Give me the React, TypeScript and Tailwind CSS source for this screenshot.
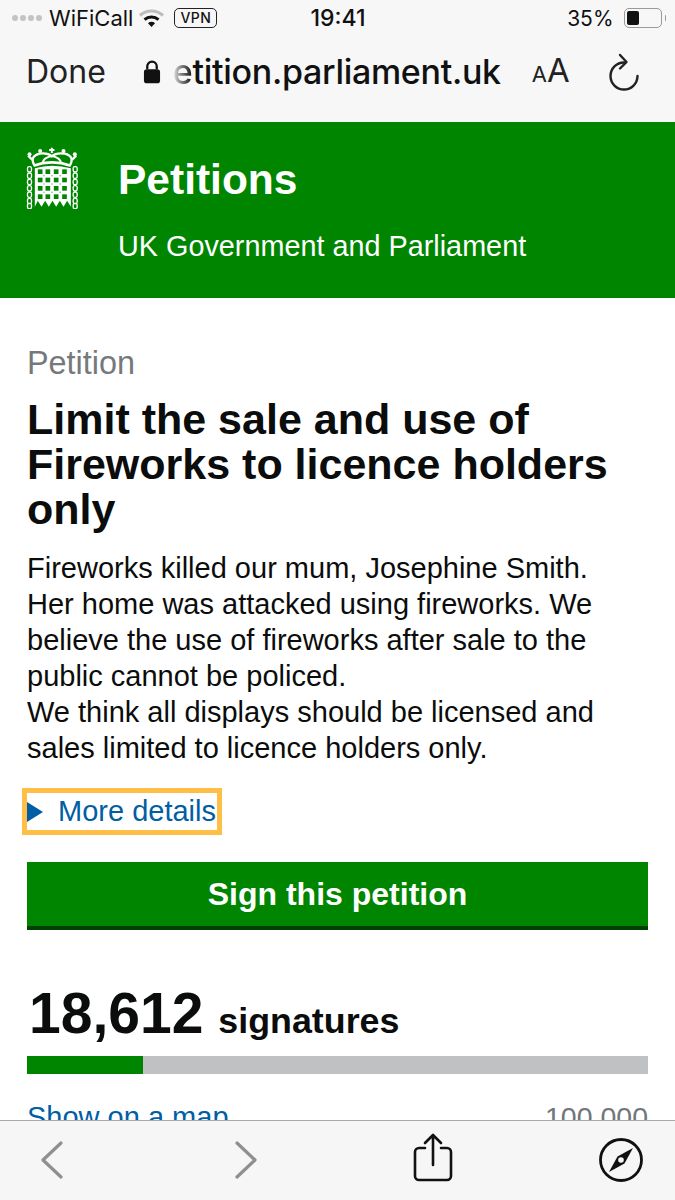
import React from "react"

const sfStack = "font-['Inter','Liberation_Sans',sans-serif]"

function Portcullis() {
  const cols = [92, 115, 140, 165]
  const rows = [110, 135, 160, 185]
  const dots = [103, 127, 152]
  const chains = [103, 122, 141, 160, 179, 198, 213]
  return (
    <svg width="53" height="62" viewBox="50 36 158 186">
      {/* crown */}
      <g fill="none" stroke="white">
        <path d="M127 38v16M119 45h16" strokeWidth="6" />
        <path d="M74 90Q60 64 90 56Q114 52 127 64Q140 52 166 56Q196 64 182 90" strokeWidth="7" />
        <path d="M101 84Q98 70 127 62Q156 70 153 84" strokeWidth="6" />
        <path d="M72 92Q127 72 184 92" strokeWidth="8" />
        <path d="M56 62l12 12M200 62l-12 12" strokeWidth="7" />
      </g>
      <g fill="white">
        <circle cx="60" cy="58" r="6" />
        <circle cx="92" cy="48" r="6" />
        <circle cx="162" cy="48" r="6" />
        <circle cx="196" cy="58" r="6" />
      </g>
      {/* gate */}
      <path
        d="M76 215V100q51-16 108 0v115l-11-18-11 18-11-18-11 18-11-18-11 18-11-18-11 18-11-18z"
        fill="white"
      />
      {rows.map((y) =>
        cols.map((x) => <rect key={`${x}-${y}`} x={x - 7} y={y - 7} width="14" height="14" fill="#008500" />),
      )}
      {dots.map((x) =>
        [122, 147, 172].map((y) => <rect key={`d${x}-${y}`} x={x - 2} y={y - 2} width="4" height="4" fill="#7fc27f" />),
      )}
      {/* chains */}
      {[60, 197].map((x) =>
        chains.map((y) => (
          <rect key={`${x}-${y}`} x={x - 6} y={y - 8} width="12" height="16" rx="5" fill="none" stroke="white" strokeWidth="4" />
        )),
      )}
    </svg>
  )
}

function Wifi() {
  return (
    <svg width="27" height="20" viewBox="0 0 27 20" fill="none">
      <path d="M2 7.5C8.5 1.5 18.5 1.5 25 7.5" stroke="#bdbdbd" strokeWidth="3.2" />
      <path d="M6.5 11.6C10.5 8.2 16.5 8.2 20.5 11.6" stroke="#111" strokeWidth="3" />
      <path d="M10 15.2L13.5 19l3.5-3.8C15 13.4 12 13.4 10 15.2z" fill="#111" />
    </svg>
  )
}

export default function App() {
  return (
    <div className="flex h-[1200px] w-[675px] flex-col overflow-hidden bg-white font-['Liberation_Sans',Arial,sans-serif]">
      <header className="h-[122px] shrink-0 bg-[#f7f7f7] text-[#111]">
        <div className={`flex h-[36px] items-center justify-between pl-[12px] pr-[9px] ${sfStack}`}>
          <div className="flex w-[228px] items-center">
            <div className="mr-[7px] flex gap-[2px]">
              <span className="h-[6px] w-[6px] rounded-full bg-[#c4c4c4]" />
              <span className="h-[6px] w-[6px] rounded-full bg-[#c4c4c4]" />
              <span className="h-[6px] w-[6px] rounded-full bg-[#c4c4c4]" />
              <span className="h-[6px] w-[6px] rounded-full bg-[#c4c4c4]" />
            </div>
            <span className="text-[22px] leading-none">WiFiCall</span>
            <span className="ml-[5px]"><Wifi /></span>
            <span className="ml-[9px] flex h-[20px] w-[43px] items-center justify-center rounded-[5px] border-[1.5px] border-[#222] text-[14px] font-medium leading-none tracking-[0.5px]">VPN</span>
          </div>
          <span className="text-[23px] font-medium leading-none">19:41</span>
          <div className="flex w-[230px] items-center justify-end">
            <span className="text-[21px] leading-none">35%</span>
            <div className="ml-[10px] h-[20px] w-[38px] rounded-[5px] border-[1.5px] border-[#999] p-[2px]">
              <div className="h-full w-[12px] rounded-[2px] bg-[#111]" />
            </div>
            <div className="ml-[3px] h-[6px] w-[1.5px] rounded-r bg-[#999]" />
          </div>
        </div>
        <div className="flex items-center pt-[12px]">
          <span className={`ml-[26px] text-[32px] leading-[44px] text-[#222] ${sfStack}`}>Done</span>
          <svg className="ml-[37px]" width="18" height="26" viewBox="0 0 19 26" fill="#111">
            <path d="M4.5 10V7a5 5 0 0 1 10 0v3" fill="none" stroke="#111" strokeWidth="2.4" />
            <rect x="1" y="10" width="17" height="15" rx="3" />
          </svg>
          <span className={`ml-[12px] text-[34px] font-medium leading-[44px] tracking-[-0.3px] ${sfStack}`}>
            <span className="bg-gradient-to-r from-[#e4e4e4] to-[#111] bg-clip-text text-transparent">e</span>
            tition.parliament.uk
          </span>
          <span className={`ml-[31px] flex items-baseline text-[#222] ${sfStack}`}>
            <span className="text-[22px] leading-[44px]">A</span>
            <span className="text-[33px] leading-[44px]">A</span>
          </span>
          <svg className="ml-[37px]" width="34" height="38" viewBox="0 0 34 38" fill="none" stroke="#222" strokeWidth="2.4" strokeLinecap="round" strokeLinejoin="round">
            <path d="M17 9.5A13.5 13.5 0 1 0 30.5 23" />
            <path d="M13 2l6.5 7-6.5 6.5" />
          </svg>
        </div>
      </header>

      <div className="flex h-[176px] shrink-0 bg-[#008500] text-white">
        <div className="ml-[26px] mt-[25px]"><Portcullis /></div>
        <div className="ml-[39px]">
          <h1 className="mt-[32px] text-[42.5px] font-bold leading-[52px]">Petitions</h1>
          <p className="mt-[24px] text-[28.8px] leading-[32px]">UK Government and Parliament</p>
        </div>
      </div>

      <main className="min-h-0 flex-1 overflow-hidden px-[27px]">
        <p className="mt-[47px] text-[32.4px] leading-[36px] text-[#75797b]">Petition</p>
        <h2 className="mt-[16px] text-[43px] font-bold leading-[45px] text-[#0b0c0c]">
          Limit the sale and use of Fireworks to licence holders only
        </h2>
        <div className="mt-[18px] pr-[20px] text-[29px] leading-[36px] text-[#0b0c0c]">
          <p>Fireworks killed our mum, Josephine Smith. Her home was attacked using fireworks. We believe the use of fireworks after sale to the public cannot be policed.</p>
          <p>We think all displays should be licensed and sales limited to licence holders only.</p>
        </div>
        <div className="mt-[22px] inline-flex h-[47px] -translate-x-[5px] items-center border-[5px] border-[#ffbf47] pr-[1px] text-[#005ea5]">
          <span className="h-0 w-0 border-y-[10px] border-l-[16px] border-y-transparent border-l-[#005ea5]" />
          <span className="ml-[15px] text-[29px] leading-none">More details</span>
        </div>
        <button className="mt-[27px] block h-[68px] w-full border-b-[4px] border-[#004000] bg-[#008500] text-center text-[32px] font-bold text-white">
          Sign this petition
        </button>
        <div className="mt-[50px] flex items-baseline text-[#0b0c0c]">
          <span className="ml-[2px] text-[57px] font-bold leading-[66px]">18,612</span>
          <span className="ml-[15px] text-[35.8px] font-bold leading-[40px]">signatures</span>
        </div>
        <div className="mt-[10px] h-[18px] bg-[#bfc1c3]">
          <div className="h-full bg-[#008500]" style={{ width: `${(18612 / 100000) * 100}%` }} />
        </div>
        <div className="mt-[26px] flex justify-between leading-[34px]">
          <span className="text-[29px] text-[#005ea5] underline">Show on a map</span>
          <span className="text-[28.5px] text-[#6f777b]">100,000</span>
        </div>
      </main>

      <footer className="flex h-[80px] shrink-0 items-center border-t border-[#aaa] bg-[#f6f6f7]">
        <svg className="ml-[40px] mb-[2px]" width="24" height="38" viewBox="0 0 24 38" fill="none" stroke="#8f8f8f" strokeWidth="3.2" strokeLinecap="round" strokeLinejoin="round">
          <path d="M21 2L3 19l18 17" />
        </svg>
        <svg className="mb-[2px] ml-[170px]" width="24" height="38" viewBox="0 0 24 38" fill="none" stroke="#8f8f8f" strokeWidth="3.2" strokeLinecap="round" strokeLinejoin="round">
          <path d="M3 2l18 17L3 36" />
        </svg>
        <svg className="mb-[6px] ml-[155px]" width="40" height="50" viewBox="0 0 40 50" fill="none" stroke="#111" strokeWidth="2.6" strokeLinecap="round" strokeLinejoin="round">
          <path d="M12 15H6a4 4 0 0 0-4 4v24a4 4 0 0 0 4 4h28a4 4 0 0 0 4-4V19a4 4 0 0 0-4-4h-6" />
          <path d="M20 32V3M12 10l8-8 8 8" />
        </svg>
        <svg className="mb-[2px] ml-[145px]" width="46" height="46" viewBox="0 0 46 46">
          <circle cx="23" cy="23" r="20.5" fill="none" stroke="#111" strokeWidth="2.8" />
          <path d="M35 11L26.5 26.5 11 35 19.5 19.5z" fill="#111" />
          <circle cx="23" cy="23" r="2.8" fill="#f6f6f7" />
        </svg>
      </footer>
    </div>
  )
}
